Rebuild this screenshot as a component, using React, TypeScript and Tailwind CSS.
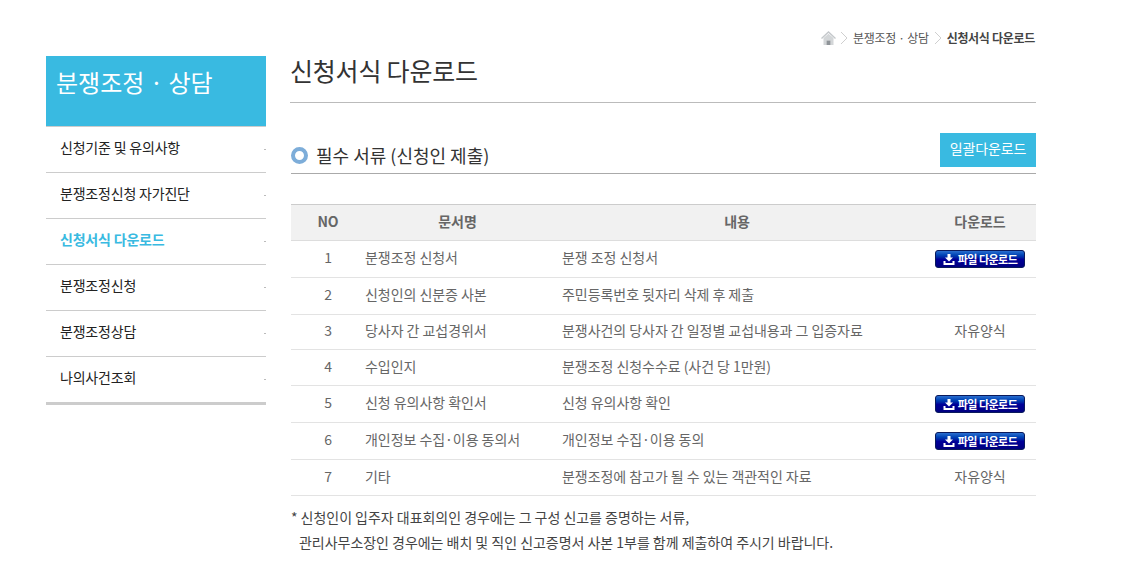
import React from 'react';

const menus = ['신청기준 및 유의사항', '분쟁조정신청 자가진단', '신청서식 다운로드', '분쟁조정신청', '분쟁조정상담', '나의사건조회'];

const rows = [
  { no: 1, name: '분쟁조정 신청서', desc: '분쟁 조정 신청서', file: 'btn', h: 'h-[37px]' },
  { no: 2, name: '신청인의 신분증 사본', desc: '주민등록번호 뒷자리 삭제 후 제출', file: '', h: 'h-[37px]' },
  { no: 3, name: '당사자 간 교섭경위서', desc: '분쟁사건의 당사자 간 일정별 교섭내용과 그 입증자료', file: '자유양식', h: 'h-[35px]' },
  { no: 4, name: '수입인지', desc: '분쟁조정 신청수수료 (사건 당 1만원)', file: '', h: 'h-[36px]' },
  { no: 5, name: '신청 유의사항 확인서', desc: '신청 유의사항 확인', file: 'btn', h: 'h-[37px]' },
  { no: 6, name: '개인정보 수집·이용 동의서', desc: '개인정보 수집·이용 동의', file: 'btn', h: 'h-[37px]' },
  { no: 7, name: '기타', desc: '분쟁조정에 참고가 될 수 있는 객관적인 자료', file: '자유양식', h: 'h-[36px]' },
];

const Crumb = () => (
  <svg width="8" height="14" viewBox="0 0 8 14" fill="none" stroke="#cfcfcf" strokeWidth="1">
    <path d="M1 1 L7 7 L1 13" />
  </svg>
);

const FileButton = () => (
  <span className="inline-flex h-[18px] w-[90px] items-center justify-center gap-[3px] rounded-[3px] border border-[#0a1a5c] bg-gradient-to-b from-[#2a6fd0] via-[#00009a] to-[#000080] align-middle text-[11px] font-bold tracking-[-0.5px] text-white">
    <svg width="12" height="11" viewBox="0 0 12 11" fill="white">
      <path d="M4.5 0 H7.5 V3.5 H10 L6 7.5 L2 3.5 H4.5 Z" />
      <path d="M0.5 7 H2.5 V9 H9.5 V7 H11.5 V11 H0.5 Z" />
    </svg>
    파일 다운로드
  </span>
);

export default function App() {
  return (
    <div className="h-[580px] w-[1131px] overflow-hidden bg-white font-['Noto_Sans_CJK_KR','Liberation_Sans',sans-serif]">
      <div className="flex h-[46px] items-center justify-end gap-[5px] pr-[96px] pt-[29px] text-[12px] leading-[16px] tracking-[-0.3px] text-[#555]">
        <svg width="15" height="14" viewBox="0 0 15 14" fill="none" className="-mr-[1px]">
          <path d="M0.5 7.5 L7.5 1 L14.5 7.5" stroke="#c4c8cb" strokeWidth="1.4" />
          <path d="M2.5 7 L7.5 2.8 L12.5 7 V14 H9.5 V9.5 H5.5 V14 H2.5 Z" fill="#d3d6d8" />
          <path d="M5.5 9.5 H9.5 V14 H5.5 Z" fill="#8f9498" />
        </svg>
        <Crumb />
        <span>분쟁조정 · 상담</span>
        <Crumb />
        <span className="font-bold text-[#444]">신청서식 다운로드</span>
      </div>

      <div className="mt-[10px] flex pl-[46px]">
        <aside className="w-[220px]">
          <div className="h-[70px] bg-[#39bae1] pl-[10px] pt-[8px] text-[24px] leading-[36px] text-white">분쟁조정 · 상담</div>
          <ul className="border-b-[3px] border-[#ccc]">
            {menus.map((m, i) => (
              <li
                key={m}
                className={`relative flex h-[46px] items-center border-t border-[#ccc] pb-[4px] pl-[14px] text-[14px] tracking-[-0.2px] ${i === 2 ? 'font-bold text-[#39bae1]' : 'text-[#222]'}`}
              >
                {m}
                <span className="absolute right-0 top-[22px] h-px w-[2px] bg-[#bbb]" />
              </li>
            ))}
          </ul>
        </aside>

        <main className="ml-[25px] w-[745px]">
          <h1 className="-ml-[1px] h-[47px] border-b border-[#bbb] pl-[1px] text-[25px] font-normal leading-[28px] tracking-[-0.2px] text-[#333]"><span className="-ml-[1px]">신청서식 다운로드</span></h1>

          <div className="mt-[30px] flex h-[41px] items-end justify-between border-b border-[#aaa]">
            <div className="flex items-center gap-[8px] pb-[6px] text-[18px] leading-[24px] text-[#333]">
              <span className="h-[17px] w-[17px] rounded-full border-[4px] border-[#7dadd9] bg-white" />
              필수 서류 (신청인 제출)
            </div>
            <button className="mb-[6px] h-[34px] w-[96px] bg-[#39bae1] pb-[4px] text-[14px] tracking-[-0.1px] text-white">일괄다운로드</button>
          </div>

          <table className="mt-[30px] w-full table-fixed border-collapse text-[14px] tracking-[-0.05px] text-[#666]">
            <colgroup>
              <col className="w-[74px]" />
              <col className="w-[185px]" />
              <col className="w-[374px]" />
              <col className="w-[112px]" />
            </colgroup>
            <thead>
              <tr className="h-[36px] border-y border-[#ddd] border-t-[#ccc] bg-[#f1f1f1]">
                <th className="pb-[2px] font-bold">NO</th>
                <th className="pb-[2px] font-bold">문서명</th>
                <th className="pb-[2px] font-bold">내용</th>
                <th className="pb-[2px] font-bold">다운로드</th>
              </tr>
            </thead>
            <tbody>
              {rows.map((r) => (
                <tr key={r.no} className={`${r.h} border-b border-[#e3e3e3]`}>
                  <td className="pb-[3px] text-center">{r.no}</td>
                  <td className="pb-[3px]">{r.name}</td>
                  <td className="pb-[3px] pl-[12px]">{r.desc}</td>
                  <td className="pb-[3px] text-center">{r.file === 'btn' ? <FileButton /> : r.file}</td>
                </tr>
              ))}
            </tbody>
          </table>

          <p className="mt-[9px] text-[14px] leading-[25px] tracking-[-0.03px] text-[#444]">
            * 신청인이 입주자 대표회의인 경우에는 그 구성 신고를 증명하는 서류,
            <br />
            <span className="pl-[8px]">관리사무소장인 경우에는 배치 및 직인 신고증명서 사본 1부를 함께 제출하여 주시기 바랍니다.</span>
          </p>
        </main>
      </div>
    </div>
  );
}
